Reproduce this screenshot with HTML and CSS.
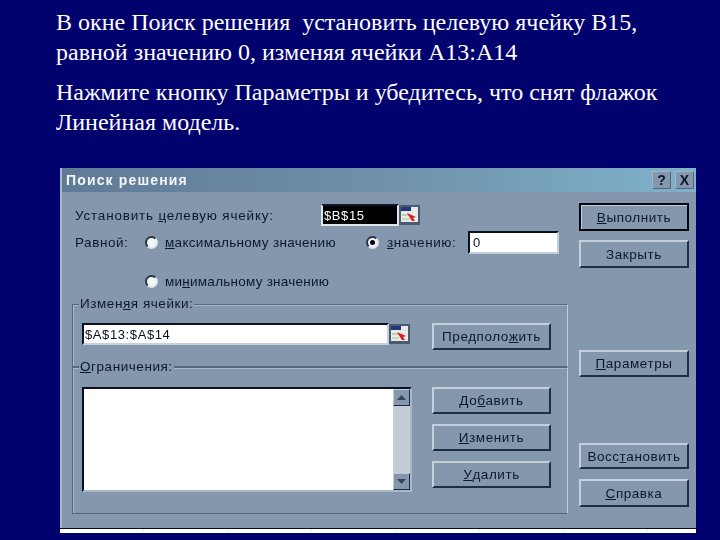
FILE: index.html
```html
<!DOCTYPE html>
<html lang="ru">
<head>
<meta charset="utf-8">
<title>Поиск решения</title>
<link rel="stylesheet" href="styles.css">
</head>
<body>
<div class="slide">
  <div class="text">
    <p>В окне Поиск решения&nbsp; установить целевую ячейку В15,<br>равной значению 0, изменяя ячейки А13:А14</p>
    <p>Нажмите кнопку Параметры и убедитесь, что снят флажок<br>Линейная модель.</p>
  </div>
  <div class="dialog">
    <div class="titlebar">
      <span class="title">Поиск решения</span>
      <span class="tb-btn">?</span>
      <span class="tb-btn tb-x">X</span>
    </div>
    <div class="content">
      <div class="left">
        <div class="row row-target">
          <span class="label label-target">Установить <u>ц</u>елевую ячейку:</span>
          <span class="field field-sel">$B$15</span>
          <span class="picker"><svg viewBox="0 0 21 20" width="21" height="20"><rect width="21" height="20" fill="#4a5a70"/><rect x="2" y="2" width="17" height="15" fill="#e8ece8"/><rect x="2" y="2" width="10" height="4" fill="#23367f"/><rect x="3" y="9" width="7" height="2" fill="#c4ccb0"/><rect x="3" y="13" width="7" height="2" fill="#ccd8b8"/><path d="M8 8 L17 12 L14 13 L16 16 L13 16 L11 13 Z" fill="#dc1c24"/></svg></span>
        </div>
        <div class="row row-equal">
          <span class="label label-equal">Равной:</span>
          <span class="radio"></span>
          <span class="label label-max"><u>м</u>аксимальному значению</span>
          <span class="radio radio-on"></span>
          <span class="label label-val"><u>з</u>начению:</span>
          <span class="field field-val">0</span>
        </div>
        <div class="row row-min">
          <span class="radio"></span>
          <span class="label label-min">ми<u>н</u>имальному значению</span>
        </div>
        <div class="group group-cells">
          <span class="legend">Измен<u>я</u>я ячейки:</span>
          <div class="group-row">
            <div class="range">
              <span class="field field-range">$A$13:$A$14</span>
              <span class="picker"><svg viewBox="0 0 21 20" width="21" height="20"><rect width="21" height="20" fill="#4a5a70"/><rect x="2" y="2" width="17" height="15" fill="#e8ece8"/><rect x="2" y="2" width="10" height="4" fill="#23367f"/><rect x="3" y="9" width="7" height="2" fill="#c4ccb0"/><rect x="3" y="13" width="7" height="2" fill="#ccd8b8"/><path d="M8 8 L17 12 L14 13 L16 16 L13 16 L11 13 Z" fill="#dc1c24"/></svg></span>
            </div>
            <span class="btn btn-side">Предполо<u>ж</u>ить</span>
          </div>
        </div>
        <div class="group group-limits">
          <span class="legend"><u>О</u>граничения:</span>
          <div class="group-row">
            <div class="list">
              <div class="scroll">
                <span class="sb-btn"><svg viewBox="0 0 9 5" width="9" height="5"><path d="M4.5 0 L9 5 H0 Z" fill="#33445a"/></svg></span>
                <span class="sb-btn"><svg viewBox="0 0 9 5" width="9" height="5"><path d="M0 0 H9 L4.5 5 Z" fill="#33445a"/></svg></span>
              </div>
            </div>
            <div class="side-stack">
              <span class="btn btn-side">До<u>б</u>авить</span>
              <span class="btn btn-side"><u>И</u>зменить</span>
              <span class="btn btn-side"><u>У</u>далить</span>
            </div>
          </div>
        </div>
      </div>
      <div class="right">
        <span class="btn btn-main btn-default"><u>В</u>ыполнить</span>
        <span class="btn btn-main btn-close">Закрыть</span>
        <span class="btn btn-main btn-params"><u>П</u>араметры</span>
        <span class="btn btn-main btn-reset">Восс<u>т</u>ановить</span>
        <span class="btn btn-main btn-help"><u>С</u>правка</span>
      </div>
    </div>
  </div>
  <div class="strip"></div>
</div>
</body>
</html>
```
FILE: styles.css
```css
* { box-sizing: border-box; }
html, body { margin: 0; height: 100%; }
body { background: #02026f; overflow: hidden; }
.slide { width: 720px; height: 540px; background: #02026f; }

.text {
  height: 168px;
  padding: 7px 40px 0 56px;
  font-family: "Liberation Serif", "Times New Roman", serif;
  font-size: 24px;
  line-height: 30px;
  color: #fff;
  white-space: nowrap;
}
.text p { margin: 0 0 10px; }

.dialog {
  width: 636px;
  height: 360px;
  margin-left: 60px;
  background: #8497ad;
  border-left: 2px solid #a9b8c8;
  font-family: "Liberation Sans", Arial, sans-serif;
  font-size: 13.5px;
  color: #0c1830;
  filter: blur(0.35px);
}
.titlebar {
  height: 24px;
  display: flex;
  align-items: center;
  gap: 4px;
  padding: 0 2px 0 4px;
  background: linear-gradient(90deg, #5f7a96 0%, #6f90aa 50%, #7fb2cc 100%);
}
.title {
  flex: 1;
  font-weight: bold;
  font-size: 14px;
  letter-spacing: 1.15px;
  color: #f4f6f8;
}
.tb-btn {
  width: 19px;
  height: 18px;
  display: flex;
  align-items: center;
  justify-content: center;
  background: #8497ad;
  border: 1px solid;
  border-color: #a4b4c4 #55677e #55677e #a4b4c4;
  font-weight: bold;
  font-size: 14px;
  color: #0a1428;
}

.content { display: flex; gap: 11px; padding-left: 10px; }
.left { width: 496px; padding-top: 12px; }
.right { width: 110px; padding-top: 11px; display: flex; flex-direction: column; }

.row { display: flex; align-items: center; padding-left: 3px; }
.label { white-space: nowrap; letter-spacing: 0.55px; }
.row-target { height: 22px; }
.label-target { width: 246px; letter-spacing: 0.8px; }
.row-equal { height: 23px; margin-top: 5px; }
.label-equal { width: 70px; }
.label-max { width: 201px; margin-left: 7px; letter-spacing: 0.3px; }
.label-val { width: 81px; margin-left: 8px; }
.row-min { height: 22px; margin-top: 16px; padding-left: 73px; }
.label-min { margin-left: 7px; letter-spacing: 0.25px; }

.radio {
  width: 13px;
  height: 13px;
  flex: none;
  border-radius: 50%;
  background: #f4f6f8;
  border: 2px solid;
  border-color: #26344a #dfe6ec #dfe6ec #26344a;
  display: flex;
  align-items: center;
  justify-content: center;
}
.radio-on::after {
  content: "";
  width: 5px;
  height: 5px;
  border-radius: 50%;
  background: #05070f;
}

.field {
  display: flex;
  align-items: center;
  height: 22px;
  padding-left: 1px;
  background: #fff;
  border: 2px solid;
  border-color: #0a1020 #c4d0dc #c4d0dc #0a1020;
  font-size: 13px;
  letter-spacing: 0.6px;
  color: #0a1020;
}
.field-sel { width: 78px; background: #000; color: #fff; border-color: #10182a #dfe6ec #dfe6ec #dfe6ec; }
.field-val { width: 91px; height: 23px; padding-left: 3px; }
.field-range { width: 307px; }
.picker { width: 21px; height: 20px; flex: none; display: block; }
.picker svg { display: block; }

.group {
  position: relative;
  width: 496px;
  border: 1px solid #54697f;
  border-right-color: #c0ccd8;
  box-shadow: inset 1px 1px 0 #a9b8c8;
  padding-left: 9px;
}
.group-cells { height: 63px; margin-top: 12px; padding-top: 18px; }
.group-limits { height: 147px; padding-top: 19px; }
.legend {
  position: absolute;
  left: 6px;
  top: -9px;
  padding: 0 1px;
  background: #8497ad;
  white-space: nowrap;
  letter-spacing: 0.55px;
}
.group-row { display: flex; gap: 20px; align-items: flex-start; }
.range { display: flex; align-items: center; width: 330px; }

.list {
  width: 330px;
  height: 105px;
  display: flex;
  justify-content: flex-end;
  background: #fff;
  border: 2px solid;
  border-color: #0a1020 #a9b8c8 #a9b8c8 #0a1020;
}
.scroll {
  width: 17px;
  display: flex;
  flex-direction: column;
  justify-content: space-between;
  background: #c2ccd6;
}
.sb-btn {
  width: 17px;
  height: 17px;
  display: flex;
  align-items: center;
  justify-content: center;
  background: #8497ad;
  border: 1px solid;
  border-color: #c0ccd8 #1c2c44 #1c2c44 #c0ccd8;
}

.btn {
  display: flex;
  align-items: center;
  justify-content: center;
  height: 27px;
  background: #8497ad;
  border: 2px solid;
  border-color: #c4d0dc #1e2e46 #1e2e46 #c4d0dc;
  white-space: nowrap;
  letter-spacing: 0.55px;
  color: #0c1830;
}
.btn-side { width: 119px; }
.side-stack { display: flex; flex-direction: column; gap: 10px; }
.btn-main { width: 110px; height: 28px; flex: none; }
.btn-default { border-color: #05070f; box-shadow: inset 1px 1px 0 #c4d0dc; }
.btn-close { margin-top: 9px; }
.btn-params { margin-top: 82px; height: 27px; }
.btn-reset { margin-top: 66px; height: 26px; }
.btn-help { margin-top: 10px; }

.strip {
  width: 636px;
  height: 5px;
  margin-left: 60px;
  background: repeating-linear-gradient(90deg, #fff 0 83px, #e8eaee 83px 84px);
  border-top: 1px solid #0a0a20;
}
```
